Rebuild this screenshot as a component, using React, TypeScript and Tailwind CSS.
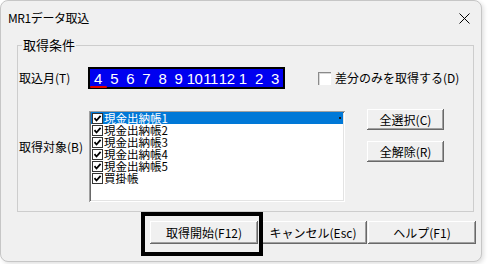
import React from "react";

const months = ["4", "5", "6", "7", "8", "9", "10", "11", "12", "1", "2", "3"];
const targets = ["現金出納帳1", "現金出納帳2", "現金出納帳3", "現金出納帳4", "現金出納帳5", "買掛帳"];

// classic 3D push button
const btn =
  "flex items-center justify-center bg-[#f0f0f0] text-[12px] leading-none text-black shadow-[inset_-1px_-1px_0_#696969,inset_1px_1px_0_#ffffff,inset_-2px_-2px_0_#a0a0a0,inset_2px_2px_0_#f0f0f0]";

function ListCheck() {
  return (
    <svg width="11" height="11" viewBox="0 0 11 11" className="shrink-0">
      <rect x="0.5" y="0.5" width="10" height="10" fill="#fff" stroke="#333" />
      <path d="M2.5 5.2 L4.5 7.5 L8.6 2.8" fill="none" stroke="#000" strokeWidth="1.8" />
    </svg>
  );
}

export default function App() {
  return (
    <div className="w-[488px] h-[264px] bg-white overflow-hidden font-['Noto_Sans_CJK_JP',sans-serif] text-black">
      <div className="w-[482px] h-[262px] bg-[#f0f0f0] border border-[#c6c6c6] rounded-[8px] shadow-[2px_2px_4px_rgba(0,0,0,0.12)] flex flex-col">
        {/* タイトルバー */}
        <div className="h-[34px] shrink-0 flex items-center justify-between pl-[7px] pr-[10px]">
          <span className="text-[12px] tracking-[-0.4px]">MR1データ取込</span>
          <svg width="11" height="11" viewBox="0 0 11 11" className="mr-[1px]">
            <path d="M0.5 0.5 L10.5 10.5 M10.5 0.5 L0.5 10.5" stroke="#000" strokeWidth="1" />
          </svg>
        </div>

        {/* 取得条件 */}
        <div className="relative ml-[16px] mr-[7px] mt-[10px] h-[167px] shrink-0 border border-[#cdcdcd] pl-[1px] pt-[21px]">
          <span className="absolute left-[4px] -top-[10px] bg-[#f0f0f0] px-[1px] text-[13px] leading-[18px]">
            取得条件
          </span>

          {/* 取込月 */}
          <div className="flex items-center h-[22px]">
            <span className="w-[69px] text-[12px]">取込月(T)</span>
            <div className="relative w-[197px] h-[22px] border-2 border-black bg-[#0000f0] grid grid-cols-12 items-center">
              {months.map((m) => (
                <span
                  key={m}
                  className="text-center text-white text-[15px] leading-none font-['Liberation_Sans',sans-serif] tracking-[-0.5px]"
                >
                  {m}
                </span>
              ))}
              <div className="absolute left-0 bottom-[-1px] w-[17px] h-[2px] rounded-full bg-[#e00000]" />
            </div>
            <label className="flex items-center ml-[33px] text-[12px]">
              <span className="w-[13px] h-[13px] bg-white border-t border-l border-[#8a8a8a] shadow-[inset_1px_1px_0_#d8d8d8] mr-[4px]" />
              差分のみを取得する(D)
            </label>
          </div>

          {/* 取得対象 */}
          <div className="flex items-start mt-[22px]">
            <span className="w-[70px] mt-[29px] text-[12px] leading-[14px]">取得対象(B)</span>
            <div className="w-[256px] h-[91px] bg-white p-[1px] shadow-[inset_1px_1px_0_#a0a0a0,inset_-1px_-1px_0_#ffffff,inset_2px_2px_0_#696969,inset_-2px_-2px_0_#e3e3e3]">
              <div className="pl-[1px] pr-[1px]">
                {targets.map((t, i) => (
                  <div
                    key={t}
                    className={
                      "relative flex items-center h-[12px] text-[11.5px] leading-[12px] " +
                      (i === 0 ? "bg-[#0078d7] text-white" : "text-black")
                    }
                  >
                    <span className="ml-[1px] mr-[1px]">
                      <ListCheck />
                    </span>
                    <span className="leading-[12px]">{t}</span>
                    {i === 0 && <span className="absolute right-[2px] top-[5px] w-[2px] h-[2px] bg-[#1a1a1a]" />}
                  </div>
                ))}
              </div>
            </div>
            <div className="flex flex-col ml-[22px] -mt-[2px] gap-[11px]">
              <button className={btn + " w-[77px] h-[21px]"}>全選択(C)</button>
              <button className={btn + " w-[77px] h-[21px]"}>全解除(R)</button>
            </div>
          </div>
        </div>

        {/* 下部ボタン */}
        <div className="relative flex ml-[149px] mt-[9px] gap-[1px]">
          <button className={btn + " w-[108px] h-[23px]"}>取得開始(F12)</button>
          <button className={btn + " w-[108px] h-[23px]"}>キャンセル(Esc)</button>
          <button className={btn + " w-[108px] h-[23px]"}>ヘルプ(F1)</button>
          <div className="absolute -left-[9px] -top-[9px] w-[122px] h-[44px] border-[4px] border-black pointer-events-none" />
        </div>
      </div>
    </div>
  );
}
